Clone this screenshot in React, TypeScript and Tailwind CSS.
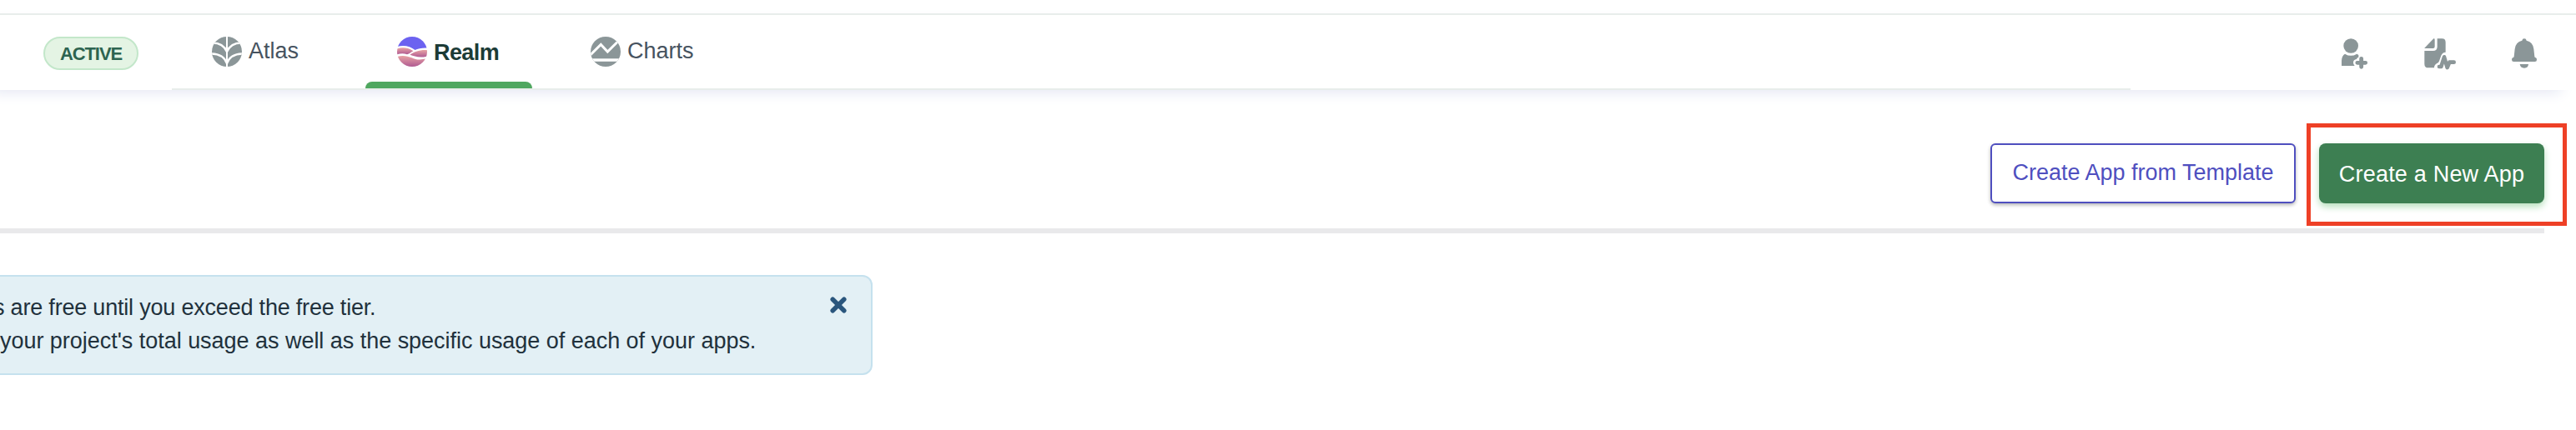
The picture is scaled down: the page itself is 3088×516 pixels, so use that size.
import React from "react";

function AtlasIcon() {
  return (
    <svg viewBox="0 0 36 36" className="size-9 shrink-0">
      <defs>
        <clipPath id="atlas"><circle cx="18" cy="18" r="18" /></clipPath>
      </defs>
      <g clipPath="url(#atlas)">
        <rect width="36" height="36" fill="#8b9698" />
        <g fill="none" stroke="#fff" strokeWidth="2.5">
          <path d="M18 0V36" strokeWidth="2" />
          <path d="M-1 7.5C8 7 15 11 18 18C21 11 28 7 37 7.5" />
          <path d="M-1 20.5C8 20.5 15 24 18 32C21 24 28 20.5 37 20.5" />
        </g>
      </g>
    </svg>
  );
}

function RealmIcon() {
  return (
    <svg viewBox="0 0 36 36" className="size-9 shrink-0">
      <defs>
        <clipPath id="realm"><circle cx="18" cy="18" r="18" /></clipPath>
        <linearGradient id="band" x1="0" y1="0" x2="0" y2="1">
          <stop offset="0" stopColor="#e8a3a4" />
          <stop offset="1" stopColor="#b05a92" />
        </linearGradient>
      </defs>
      <g clipPath="url(#realm)">
        <rect width="36" height="36" fill="#fff" />
        <path d="M0 0H36V13.5C30 13.2 25 14.5 21.500 16C16 11.500 8 9.500 0 12Z" fill="#6c62f0" />
        <path d="M0 14.500C8 12 14 14 19.500 17.200C16.500 18.500 15 20.500 12 21.200C8 19.800 4 20 0 21.200Z" fill="url(#band)" />
        <path d="M36 16C27 15.500 20 18 15.500 21.800C21 23.500 26 25.700 36 23.800Z" fill="url(#band)" />
        <path d="M0 24C12 20 20 28 27 27.500C31 27.300 34 26.500 36 26V36H0Z" fill="url(#band)" />
      </g>
    </svg>
  );
}

function ChartsIcon() {
  return (
    <svg viewBox="0 0 36 36" className="size-9 shrink-0">
      <defs>
        <clipPath id="charts"><circle cx="18" cy="18" r="18" /></clipPath>
      </defs>
      <g clipPath="url(#charts)">
        <rect width="36" height="36" fill="#8b9698" />
        <path d="M-2 23.500L12.300 9.500L20.300 18L34 4.500" fill="none" stroke="#fff" strokeWidth="3" />
        <rect y="26.300" width="36" height="3.500" fill="#fff" />
      </g>
    </svg>
  );
}

function InviteIcon() {
  return (
    <svg viewBox="138 135 102 120" className="h-10 w-[34px]" fill="#8b9698">
      <circle cx="174.500" cy="165" r="26.500" />
      <path d="M141 237V218Q142 200 153 194Q174 207 196 194L202 198V206Q196 207 195 213Q183 215 183 225Q183 233 188 237Z" />
      <path d="M212 211V241M197.500 226H227" stroke="#8b9698" strokeWidth="14.500" strokeLinecap="round" />
    </svg>
  );
}

function ActivityIcon() {
  return (
    <svg viewBox="435 135 120 120" className="size-10" fill="#8b9698">
      <path d="M439 173L472 139Q476 138 476 143V168Q476 174 470 174H441Q438 174 439 173Z" />
      <path d="M485 139H502Q515 139 515 152V188Q504 188 499 200L492 220Q490 226 484 228Q474 233 474 244H453Q439 244 439 230V183H470Q485 183 485 168Z" />
      <path d="M492 240H499L510 205L521 243L529 224H545" fill="none" stroke="#8b9698" strokeWidth="14" strokeLinecap="round" strokeLinejoin="round" />
    </svg>
  );
}

function BellIcon() {
  return (
    <svg viewBox="750 135 96 120" className="h-10 w-8" fill="#8b9698">
      <path d="M790 146Q791 139 798 139Q805 139 806 146Q829 151 832 176L835 204Q836 208 840 208Q843 210 843 215Q843 222 836 222H760Q753 222 753 215Q753 210 756 208Q760 208 761 204L764 176Q767 151 790 146Z" />
      <path d="M782 231H813Q812 245 798 245Q784 245 782 231Z" />
    </svg>
  );
}

export default function App() {
  return (
    <div className="h-[516px] w-[3088px] overflow-hidden bg-white pt-4 font-['Liberation_Sans',sans-serif]">
      <header className="relative flex h-[92px] w-full border-t-2 border-[#e8edeb] bg-white shadow-[-14px_7px_16px_-4px_#e4e7f3]">
        <div className="w-[206px] pt-[26px] pl-[52px]">
          <span className="flex h-10 w-[114px] items-center justify-center rounded-full border-2 border-[#c3e7ca] bg-[#e4f4e4] text-[22px] font-bold tracking-[-1.1px] text-[#2d6450]">
            ACTIVE
          </span>
        </div>
        <nav className="flex w-[2348px] border-b-2 border-[#e8edeb] text-[27px] text-[#47535f]">
          <a className="mt-[18px] ml-12 flex h-[52px] items-center gap-2 self-start">
            <AtlasIcon /><span className="-mt-0.5">Atlas</span>
          </a>
          <a className="ml-20 flex h-full w-[200px] flex-col justify-between">
            <span className="mt-[18px] flex h-[52px] items-center gap-2 pl-[38px] font-bold tracking-[-0.6px] text-[#1c3b36]">
              <RealmIcon /><span className="mt-0.5">Realm</span>
            </span>
            <span className="h-2 rounded-t-lg bg-[#4fa75f]" />
          </a>
          <a className="mt-[18px] ml-[70px] flex h-[52px] items-center gap-2">
            <ChartsIcon /><span className="-mt-0.5">Charts</span>
          </a>
        </nav>
        <div className="flex pt-[27px] pl-[252px]">
          <InviteIcon />
          <div className="ml-[65px]"><ActivityIcon /></div>
          <div className="ml-[65px]"><BellIcon /></div>
        </div>
      </header>

      <main>
        <section className="flex h-[172px] w-[3050px] justify-end gap-7 border-b-[6px] border-[#e9e9eb] pt-16 text-[27px]">
          <button className="h-[72px] w-[366px] rounded-md border-2 border-[#4f4fbf] bg-white pb-0.5 tracking-[0px] whitespace-nowrap text-[#4f4fbf] shadow-[0_2px_4px_rgba(0,0,0,0.3)]">
            Create App from Template
          </button>
          <div className="relative">
            <button className="h-[72px] w-[270px] rounded-lg bg-[#3d7f52] pt-0.5 tracking-[0.2px] whitespace-nowrap text-white shadow-[0_4px_8px_#b5dfbb]">
              Create a New App
            </button>
            <div className="pointer-events-none absolute -top-6 -left-[15px] h-[123px] w-[312px] border-[5px] border-[#ee4026]" />
          </div>
        </section>

        <section className="mt-[50px] -ml-4 flex h-[120px] w-[1062px] justify-between rounded-xl border-2 border-[#c5e1ee] bg-[#e3f0f5] pt-[17px] pr-[29px] text-[27px] leading-10 text-[#21313c]">
          <div className="whitespace-nowrap">
            <p className="pl-1.5 tracking-[-0.2px]">s are free until you exceed the free tier.</p>
            <p className="pl-3.5 tracking-[-0.03px]">your project's total usage as well as the specific usage of each of your apps.</p>
          </div>
          <svg viewBox="0 0 20 20" className="mt-[7px] size-5">
            <path d="M3.200 3.200L16.800 16.800M16.800 3.200L3.200 16.800" stroke="#2a567d" strokeWidth="5.500" strokeLinecap="round" />
          </svg>
        </section>
      </main>
    </div>
  );
}
